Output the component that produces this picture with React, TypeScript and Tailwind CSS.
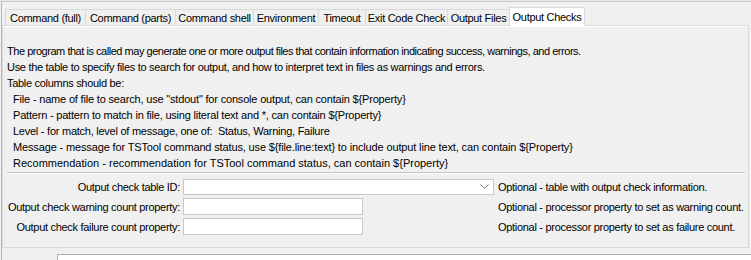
export default function App() {
  const tabs = [
    { label: "Command (full)", w: 80 },
    { label: "Command (parts)", w: 90 },
    { label: "Command shell", w: 78 },
    { label: "Environment", w: 65 },
    { label: "Timeout", w: 47 },
    { label: "Exit Code Check", w: 82 },
    { label: "Output Files", w: 62 },
  ];
  const lines = [
    { t: "The program that is called may generate one or more output files that contain information indicating success, warnings, and errors.", c: "tracking-[-0.47px]" },
    { t: "Use the table to specify files to search for output, and how to interpret text in files as warnings and errors.", c: "tracking-[-0.3px]" },
    { t: "Table columns should be:", c: "tracking-[-0.3px]" },
  ];
  const cols = [
    { t: 'File - name of file to search, use "stdout" for console output, can contain ${Property}', c: "tracking-[-0.18px]" },
    { t: "Pattern - pattern to match in file, using literal text and *, can contain ${Property}", c: "tracking-[-0.2px]" },
    { t: "Level - for match, level of message, one of:  Status, Warning, Failure", c: "tracking-[-0.25px]" },
    { t: "Message - message for TSTool command status, use ${file.line:text} to include output line text, can contain ${Property}", c: "tracking-[-0.14px]" },
    { t: "Recommendation - recommendation for TSTool command status, can contain ${Property}", c: "tracking-[0px]" },
  ];
  return (
    <div className="w-[751px] h-[260px] bg-[#f0f0f0] overflow-hidden text-[11px] leading-[16px] text-black font-['Liberation_Sans',Arial,sans-serif] tracking-[-0.3px]">
      <div className="h-[1px] bg-[#e8e8e8]" />
      <div className="h-[1px] bg-[#c9c9c9]" />
      <div className="ml-[1px] border-l border-[#b8b8b8] h-[258px]">
        <div className="h-[23px] flex items-end pl-[3px]">
          {tabs.map((t) => (
            <div
              key={t.label}
              style={{ width: t.w }}
              className="h-[16px] border-t border-l border-[#d9d9d9] bg-[#f0f0f0] flex items-center justify-center whitespace-nowrap"
            >
              {t.label}
            </div>
          ))}
          <div className="relative z-10 w-[76px] h-[19px] -mb-[1px] border border-b-0 border-[#d9d9d9] bg-white flex items-center justify-center whitespace-nowrap pb-[1px]">
            Output Checks
          </div>
        </div>
        <div className="w-[747px] h-[223px] border border-[#d9d9d9] bg-[#f0f0f0]">
          <div className="h-[1px] bg-white" />
          <div className="pl-[4px] pt-[16px]">
            {lines.map((l) => (
              <div key={l.t} className={"whitespace-pre h-[16px] " + l.c}>{l.t}</div>
            ))}
            {cols.map((l) => (
              <div key={l.t} className={"whitespace-pre h-[16px] pl-[6px] " + l.c}>{l.t}</div>
            ))}
          </div>
          <div className="ml-[4px] mr-[3px] mt-[1px] border-t border-[#c4c4c4] border-b border-b-white" />
          <div className="pl-[4px] pt-[4px] flex flex-col gap-[3px]">
            <div className="flex items-center h-[17px]">
              <div className="w-[173px] text-right whitespace-nowrap">Output check table ID:</div>
              <div className="ml-[3px] w-[311px] h-[16px] bg-white border border-[#c8c8c8] flex items-center justify-end pr-[4px]">
                <svg width="9" height="5" viewBox="0 0 9 5" fill="none">
                  <path d="M0.5 0.5 L4.5 4.5 L8.5 0.5" stroke="#707070" strokeWidth="1" />
                </svg>
              </div>
              <div className="ml-[4px] whitespace-nowrap">Optional - table with output check information.</div>
            </div>
            <div className="flex items-center h-[17px]">
              <div className="w-[173px] text-right whitespace-nowrap">Output check warning count property:</div>
              <div className="ml-[3px] w-[180px] h-[17px] bg-white border border-[#c8c8c8]" />
              <div className="ml-[135px] whitespace-nowrap">Optional - processor property to set as warning count.</div>
            </div>
            <div className="flex items-center h-[17px]">
              <div className="w-[173px] text-right whitespace-nowrap">Output check failure count property:</div>
              <div className="ml-[3px] w-[180px] h-[17px] bg-white border border-[#c8c8c8]" />
              <div className="ml-[135px] whitespace-nowrap">Optional - processor property to set as failure count.</div>
            </div>
          </div>
        </div>
        <div className="mt-[6px] ml-[55px] h-[12px] bg-white border-t border-l border-[#b0b0b0]" />
      </div>
    </div>
  );
}
